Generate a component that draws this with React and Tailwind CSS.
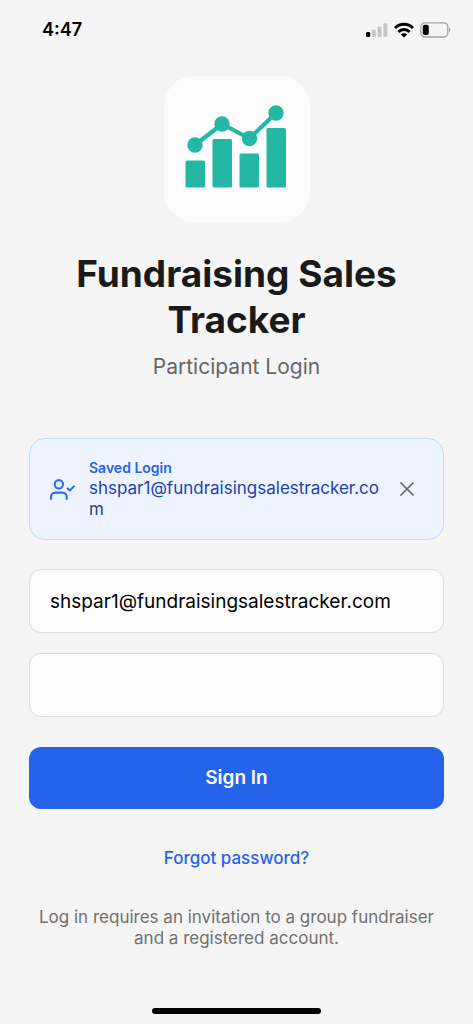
import { useState } from "react";
import { X } from "lucide-react";

function StatusBar() {
  return (
    <header className="flex items-center justify-between pt-4 pr-[22px] pl-[42px] text-black">
      <div className="text-lg leading-7 font-semibold">4:47</div>
      <div className="flex items-center gap-[5px]">
        <svg width="22" height="16" viewBox="0 0 22 16" fill="#c6c6c6">
          <rect x="0" y="10" width="4.2" height="5" rx="1.3" fill="#000" />
          <rect x="5.8" y="7.5" width="4" height="7.5" rx="1.3" />
          <rect x="11.6" y="4.5" width="4" height="10.5" rx="1.3" />
          <rect x="17.4" y="1.2" width="4" height="13.8" rx="1.3" />
        </svg>
        <svg width="22" height="16" viewBox="0 0 22 16" fill="none" stroke="#000" strokeWidth="2.9">
          <path d="M2 6a12.8 12.8 0 0 1 18 0" />
          <path d="M5.4 9.9a7.9 7.9 0 0 1 11.2 0" />
          <path d="M11 15.6l-3.2-3.1a4.5 4.5 0 0 1 6.4 0z" fill="#000" stroke="none" />
        </svg>
        <svg width="31" height="16" viewBox="0 0 31 16" fill="none">
          <rect x="0.8" y="0.8" width="27" height="14.2" rx="4.2" stroke="#a3a3a3" strokeWidth="1.3" />
          <rect x="2.8" y="2.8" width="6" height="10.2" rx="2" fill="#000" />
          <path d="M29 5.5c1.8.8 1.8 4 0 4.8z" fill="#a3a3a3" />
        </svg>
      </div>
    </header>
  );
}

function Logo() {
  return (
    <div className="rounded-[30px] bg-[#fcfcfc]">
      <svg width="146" height="146" viewBox="0 0 146 146" fill="#24b8a4">
        <rect x="21.5" y="84.5" width="19.5" height="27" rx="1.5" />
        <rect x="48.5" y="63" width="19.5" height="48.5" rx="1.5" />
        <rect x="75.5" y="77.5" width="19.5" height="34" rx="1.5" />
        <rect x="102.5" y="52" width="19.5" height="59.5" rx="1.5" />
        <polyline points="31,69 58,48 85.5,62.5 112,37" fill="none" stroke="#24b8a4" strokeWidth="4.2" />
        <circle cx="31" cy="69" r="7.7" />
        <circle cx="58" cy="48" r="7.7" />
        <circle cx="85.5" cy="62.5" r="7.7" />
        <circle cx="112" cy="37" r="7.7" />
      </svg>
    </div>
  );
}

function UserCheckIcon() {
  return (
    <svg
      width="25"
      height="25"
      viewBox="0 0 24 24"
      fill="none"
      stroke="currentColor"
      strokeWidth="2"
      strokeLinecap="round"
      strokeLinejoin="round"
      className="shrink-0 text-[#2f6bee]"
    >
      <path d="M16 21v-2a4 4 0 0 0-4-4H5a4 4 0 0 0-4 4v2" />
      <circle cx="8.5" cy="7" r="4" />
      <polyline points="17 11 19 13 23 9" />
    </svg>
  );
}

function SavedLogin({ email, onUse, onDismiss }) {
  return (
    <div className="flex items-center rounded-2xl border border-[#bfdbfe] bg-[#edf4ff] py-[19px] pr-5 pl-5">
      <button type="button" onClick={onUse} className="flex min-w-0 flex-1 items-center gap-[14px] text-left">
        <UserCheckIcon />
        <span className="flex min-w-0 flex-1 flex-col">
          <span className="text-sm leading-5 font-semibold text-[#2563eb]">Saved Login</span>
          <span className="text-[17px] leading-[21px] break-all text-[#1e40af]">{email}</span>
        </span>
      </button>
      <button type="button" aria-label="Remove saved login" onClick={onDismiss} className="p-1 text-[#666666]">
        <X size={24} strokeWidth={1.75} />
      </button>
    </div>
  );
}

const inputClass =
  "h-16 w-full rounded-xl border border-[#dddddd] bg-[#fcfcfc] px-5 text-[19px] text-black outline-none";

function App() {
  const savedEmail = "shspar1@fundraisingsalestracker.com";
  const [email, setEmail] = useState(savedEmail);
  const [password, setPassword] = useState("");
  const [showSaved, setShowSaved] = useState(true);

  return (
    <div className="flex min-h-screen flex-col bg-[#f5f5f5] font-[Inter,sans-serif]">
      <StatusBar />
      <main className="flex flex-1 flex-col px-[29px] pt-8">
        <div className="flex flex-col items-center text-center">
          <Logo />
          <h1 className="mt-[29px] text-[37px] leading-[46px] font-bold text-[#1a1a1a]">
            Fundraising Sales Tracker
          </h1>
          <p className="mt-[10px] text-[21px] leading-7 text-[#666666]">Participant Login</p>
        </div>

        <form className="mt-[57px] flex flex-col" onSubmit={(e) => e.preventDefault()}>
          {showSaved && (
            <SavedLogin
              email={savedEmail}
              onUse={() => setEmail(savedEmail)}
              onDismiss={() => setShowSaved(false)}
            />
          )}
          <div className="mt-[29px] flex flex-col gap-5">
            <input
              type="email"
              aria-label="Email"
              value={email}
              onChange={(e) => setEmail(e.target.value)}
              className={inputClass}
            />
            <input
              type="password"
              aria-label="Password"
              value={password}
              onChange={(e) => setPassword(e.target.value)}
              className={inputClass}
            />
          </div>
          <button
            type="submit"
            className="mt-[30px] h-[62px] rounded-xl bg-[#2563eb] text-[19px] font-semibold text-white"
          >
            Sign In
          </button>
        </form>

        <a href="#forgot" className="mt-[39px] self-center text-[17px] leading-[21px] font-medium text-[#2563eb]">
          Forgot password?
        </a>
        <p className="mt-[38px] text-center text-[17px] leading-[21px] text-[#707070]">
          Log in requires an invitation to a group fundraiser and a registered account.
        </p>
      </main>
      <div className="mb-[10px] h-[6px] w-[169px] self-center rounded-full bg-black" />
    </div>
  );
}

export default App;
